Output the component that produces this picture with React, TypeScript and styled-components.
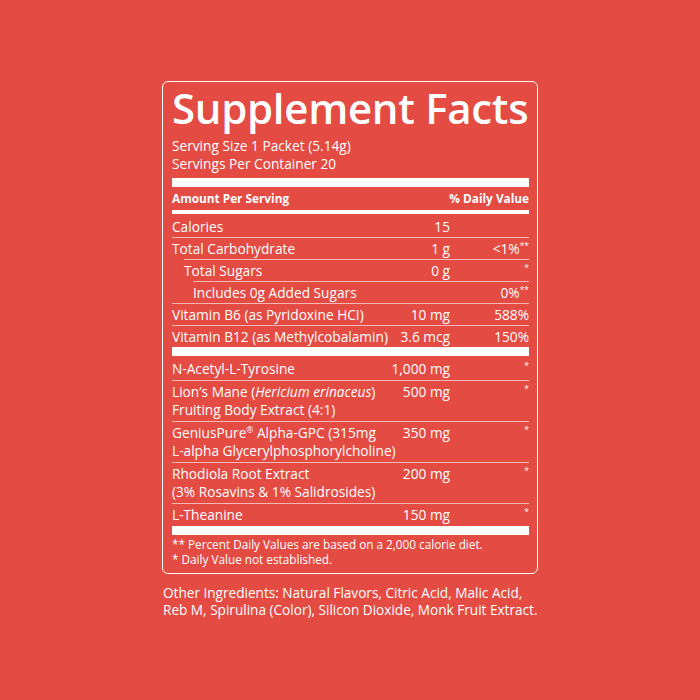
import React from "react";
import styled, { createGlobalStyle } from "styled-components";

const Global = createGlobalStyle`
  html, body { margin: 0; padding: 0; background: #E34B43; }
  body { font-family: "Open Sans", "Lato", sans-serif; color: #fff; }
`;

const Page = styled.div`
  width: 700px;
  height: 700px;
  background: #E34B43;
  display: flex;
  justify-content: center;
  padding-top: 81px;
  box-sizing: border-box;
`;

const Column = styled.div`
  width: 376px;
  display: flex;
  flex-direction: column;
`;

const Panel = styled.div`
  border: 1px solid #fff;
  border-radius: 6px;
  padding: 0 8px 6px 9px;
  display: flex;
  flex-direction: column;
`;

const Title = styled.h1`
  margin: 3px 0 0;
  font-size: 42px;
  font-weight: 600;
  line-height: 46px;
  letter-spacing: -0.3px;
  white-space: nowrap;
`;

const Serving = styled.div`
  font-size: 13.7px;
  line-height: 18px;
`;

const ServingBlock = styled.div`
  margin-top: 6px;
  margin-bottom: 5px;
`;

const Bar = styled.div<{ $h: number }>`
  height: ${(p) => p.$h}px;
  background: #fff;
`;

const HeadRow = styled.div`
  display: flex;
  justify-content: space-between;
  font-size: 11.8px;
  font-weight: 700;
  line-height: 23px;
`;

const Row = styled.div<{ $indent?: number; $first?: boolean; $lh: number }>`
  display: grid;
  grid-template-columns: 1fr max-content 79px;
  margin-left: ${(p) => p.$indent || 0}px;
  border-top: ${(p) => (p.$first ? "none" : "1px solid rgba(255,255,255,0.6)")};
  padding-top: ${(p) => (p.$first ? 4 : 2)}px;
  padding-bottom: ${(p) => (p.$lh >= 18 ? 2 : 1.5)}px;
  font-size: 13.7px;
  line-height: ${(p) => p.$lh}px;
`;

const Name = styled.div``;

const Amount = styled.div`
  text-align: right;
`;

const DV = styled.div`
  text-align: right;
`;

const Sup = styled.sup`
  font-size: 8.5px;
  line-height: 0;
  vertical-align: 5px;
`;

const Notes = styled.div`
  font-size: 11.75px;
  line-height: 15px;
  padding-top: 2px;
`;

const Other = styled.p`
  margin: 9.5px 0 0 1px;
  font-size: 13.6px;
  line-height: 17px;
`;

type Item = {
  name: React.ReactNode;
  amount: string;
  dv: React.ReactNode;
  indent?: number;
};

const group1: Item[] = [
  { name: "Calories", amount: "15", dv: "" },
  { name: "Total Carbohydrate", amount: "1 g", dv: <>&lt;1%<Sup>**</Sup></> },
  { name: "Total Sugars", amount: "0 g", dv: <Sup>*</Sup>, indent: 12 },
  { name: "Includes 0g Added Sugars", amount: "", dv: <>0%<Sup>**</Sup></>, indent: 21 },
  { name: "Vitamin B6 (as Pyridoxine HCI)", amount: "10 mg", dv: "588%" },
  { name: "Vitamin B12 (as Methylcobalamin)", amount: "3.6 mcg", dv: "150%" },
];

const group2: Item[] = [
  { name: "N-Acetyl-L-Tyrosine", amount: "1,000 mg", dv: <Sup>*</Sup> },
  {
    name: (
      <>
        Lion’s Mane (<i>Hericium erinaceus</i>)
        <br />
        Fruiting Body Extract (4:1)
      </>
    ),
    amount: "500 mg",
    dv: <Sup>*</Sup>,
  },
  {
    name: (
      <>
        GeniusPure<Sup>®</Sup> Alpha-GPC (315mg
        <br />
        L-alpha Glycerylphosphorylcholine)
      </>
    ),
    amount: "350 mg",
    dv: <Sup>*</Sup>,
  },
  {
    name: (
      <>
        Rhodiola Root Extract
        <br />
        (3% Rosavins &amp; 1% Salidrosides)
      </>
    ),
    amount: "200 mg",
    dv: <Sup>*</Sup>,
  },
  { name: "L-Theanine", amount: "150 mg", dv: <Sup>*</Sup> },
];

const Rows = ({ items, lh }: { items: Item[]; lh: number }) => (
  <>
    {items.map((it, i) => (
      <Row key={i} $indent={it.indent} $first={i === 0} $lh={lh}>
        <Name>{it.name}</Name>
        <Amount>{it.amount}</Amount>
        <DV>{it.dv}</DV>
      </Row>
    ))}
  </>
);

export default function App() {
  return (
    <Page>
      <Global />
      <Column>
        <Panel>
          <Title>Supplement Facts</Title>
          <ServingBlock>
            <Serving>Serving Size 1 Packet (5.14g)</Serving>
            <Serving>Servings Per Container 20</Serving>
          </ServingBlock>
          <Bar $h={9} />
          <HeadRow>
            <span>Amount Per Serving</span>
            <span>% Daily Value</span>
          </HeadRow>
          <Bar $h={4} />
          <Rows items={group1} lh={17.5} />
          <Bar $h={9} />
          <Rows items={group2} lh={18} />
          <Bar $h={9} />
          <Notes>
            <div>** Percent Daily Values are based on a 2,000 calorie diet.</div>
            <div>* Daily Value not established.</div>
          </Notes>
        </Panel>
        <Other>
          Other Ingredients: Natural Flavors, Citric Acid, Malic Acid,
          <br />
          Reb M, Spirulina (Color), Silicon Dioxide, Monk Fruit Extract.
        </Other>
      </Column>
    </Page>
  );
}
